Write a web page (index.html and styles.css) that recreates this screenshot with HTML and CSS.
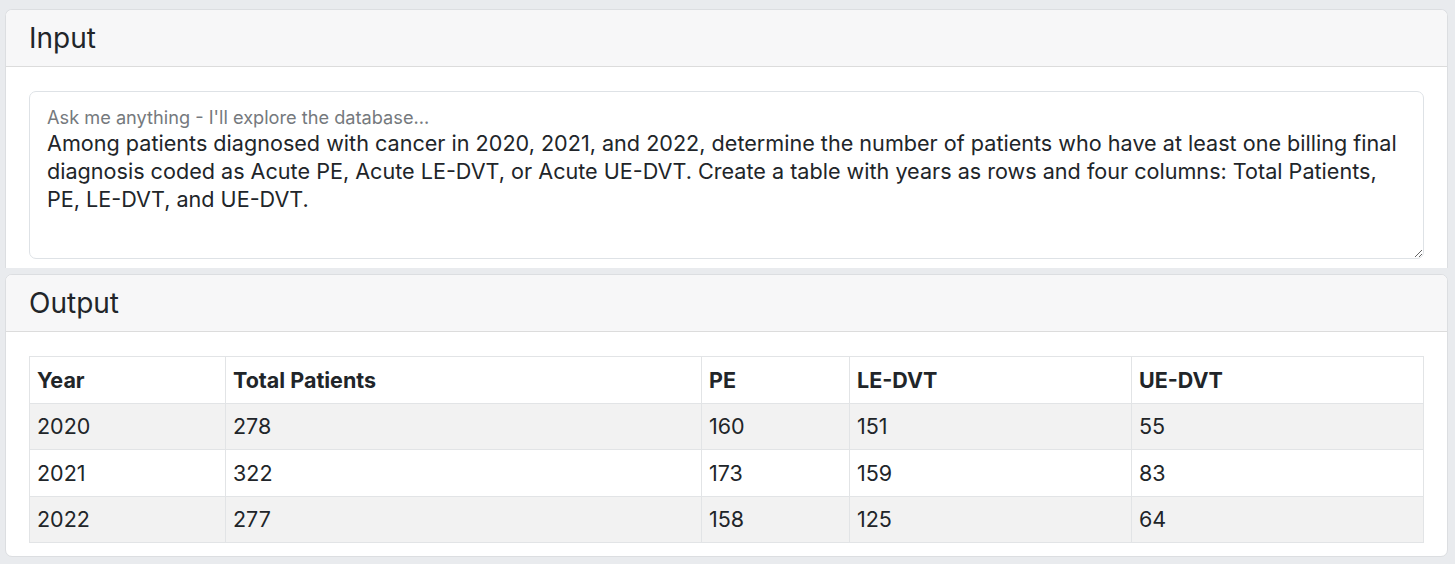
FILE: index.html
```html
<!DOCTYPE html>
<html lang="en">
<head>
    <meta charset="UTF-8">
    <title>Query</title>
    <link rel="stylesheet" href="styles.css">
</head>
<body>
<div class="page">

    <!--input card-->
    <div class="card card-input">
        <div class="card-header"><h4>Input</h4></div>
        <div class="card-body">
            <div class="floating">
                <textarea id="question" class="question">Among patients diagnosed with cancer in 2020, 2021, and 2022, determine the number of patients who have at least one billing final diagnosis coded as Acute PE, Acute LE-DVT, or Acute UE-DVT. Create a table with years as rows and four columns: Total Patients, PE, LE-DVT, and UE-DVT.</textarea>
                <label for="question">Ask me anything - I'll explore the database...</label>
            </div>
        </div>
    </div>

    <!--output card-->
    <div class="card card-output">
        <div class="card-header"><h4>Output</h4></div>
        <div class="card-body">
            <table class="result">
                <thead>
                <tr>
                    <th class="c-year">Year</th>
                    <th class="c-total">Total Patients</th>
                    <th class="c-pe">PE</th>
                    <th class="c-le">LE-DVT</th>
                    <th class="c-ue">UE-DVT</th>
                </tr>
                </thead>
                <tbody>
                <tr><td>2020</td><td>278</td><td>160</td><td>151</td><td>55</td></tr>
                <tr><td>2021</td><td>322</td><td>173</td><td>159</td><td>83</td></tr>
                <tr><td>2022</td><td>277</td><td>158</td><td>125</td><td>64</td></tr>
                </tbody>
            </table>
        </div>
    </div>
</div>
</body>
</html>
```

FILE: styles.css
```css
*{
    margin: 0;
    padding: 0;
    box-sizing: border-box;
}
html,body{
    height: 100%;
}
body{
    background: #e9ebee;
    font-family: Inter, "Liberation Sans", Arial, sans-serif;
    color: #212529;
    overflow: hidden;
}
.page{
    display: flex;
    flex-direction: column;
    gap: 6px;
    padding: 9px 7px 0 5px;
}
.card{
    background: #fff;
    border: 1px solid #dcdee1;
    border-radius: 7px;
    overflow: hidden;
}
.card-input{
    border-bottom: none;
    border-radius: 7px 7px 0 0;
}
.card-header{
    height: 57px;
    padding: 0 23px;
    display: flex;
    align-items: center;
    background: #f7f7f8;
    border-bottom: 1px solid #dcdcdc;
}
.card-header h4{
    font-size: 28px;
    font-weight: 400;
    line-height: 1;
    margin-top: -1px;
}
.card-input .card-body{
    padding: 24px 23px 9px;
}
.card-output .card-body{
    padding: 24px 23px 13px;
}

/*floating label textarea*/
.floating{
    position: relative;
}
.question{
    display: block;
    width: 100%;
    height: 168px;
    border: 1px solid #dee2e6;
    border-radius: 7px;
    padding: 37px 17px 8px;
    font-family: Inter, "Liberation Sans", Arial, sans-serif;
    font-size: 21.6px;
    line-height: 28px;
    color: #212529;
    resize: vertical;
    outline: none;
}
.floating label{
    position: absolute;
    top: 16px;
    left: 18px;
    font-size: 18.2px;
    line-height: 20px;
    color: #75797d;
}

/*table*/
.result{
    width: 100%;
    border-collapse: collapse;
    font-size: 21.5px;
    line-height: 28px;
}
.result th,
.result td{
    border: 1px solid #e2e4e6;
    height: 46.5px;
    padding: 0 7px;
    text-align: left;
    vertical-align: middle;
}
.result th{
    font-weight: bold;
}
.result tbody tr:nth-child(odd){
    background: #f2f2f2;
}
.c-year{ width: 196px; }
.c-total{ width: 476px; }
.c-pe{ width: 148px; }
.c-le{ width: 282px; }
```
